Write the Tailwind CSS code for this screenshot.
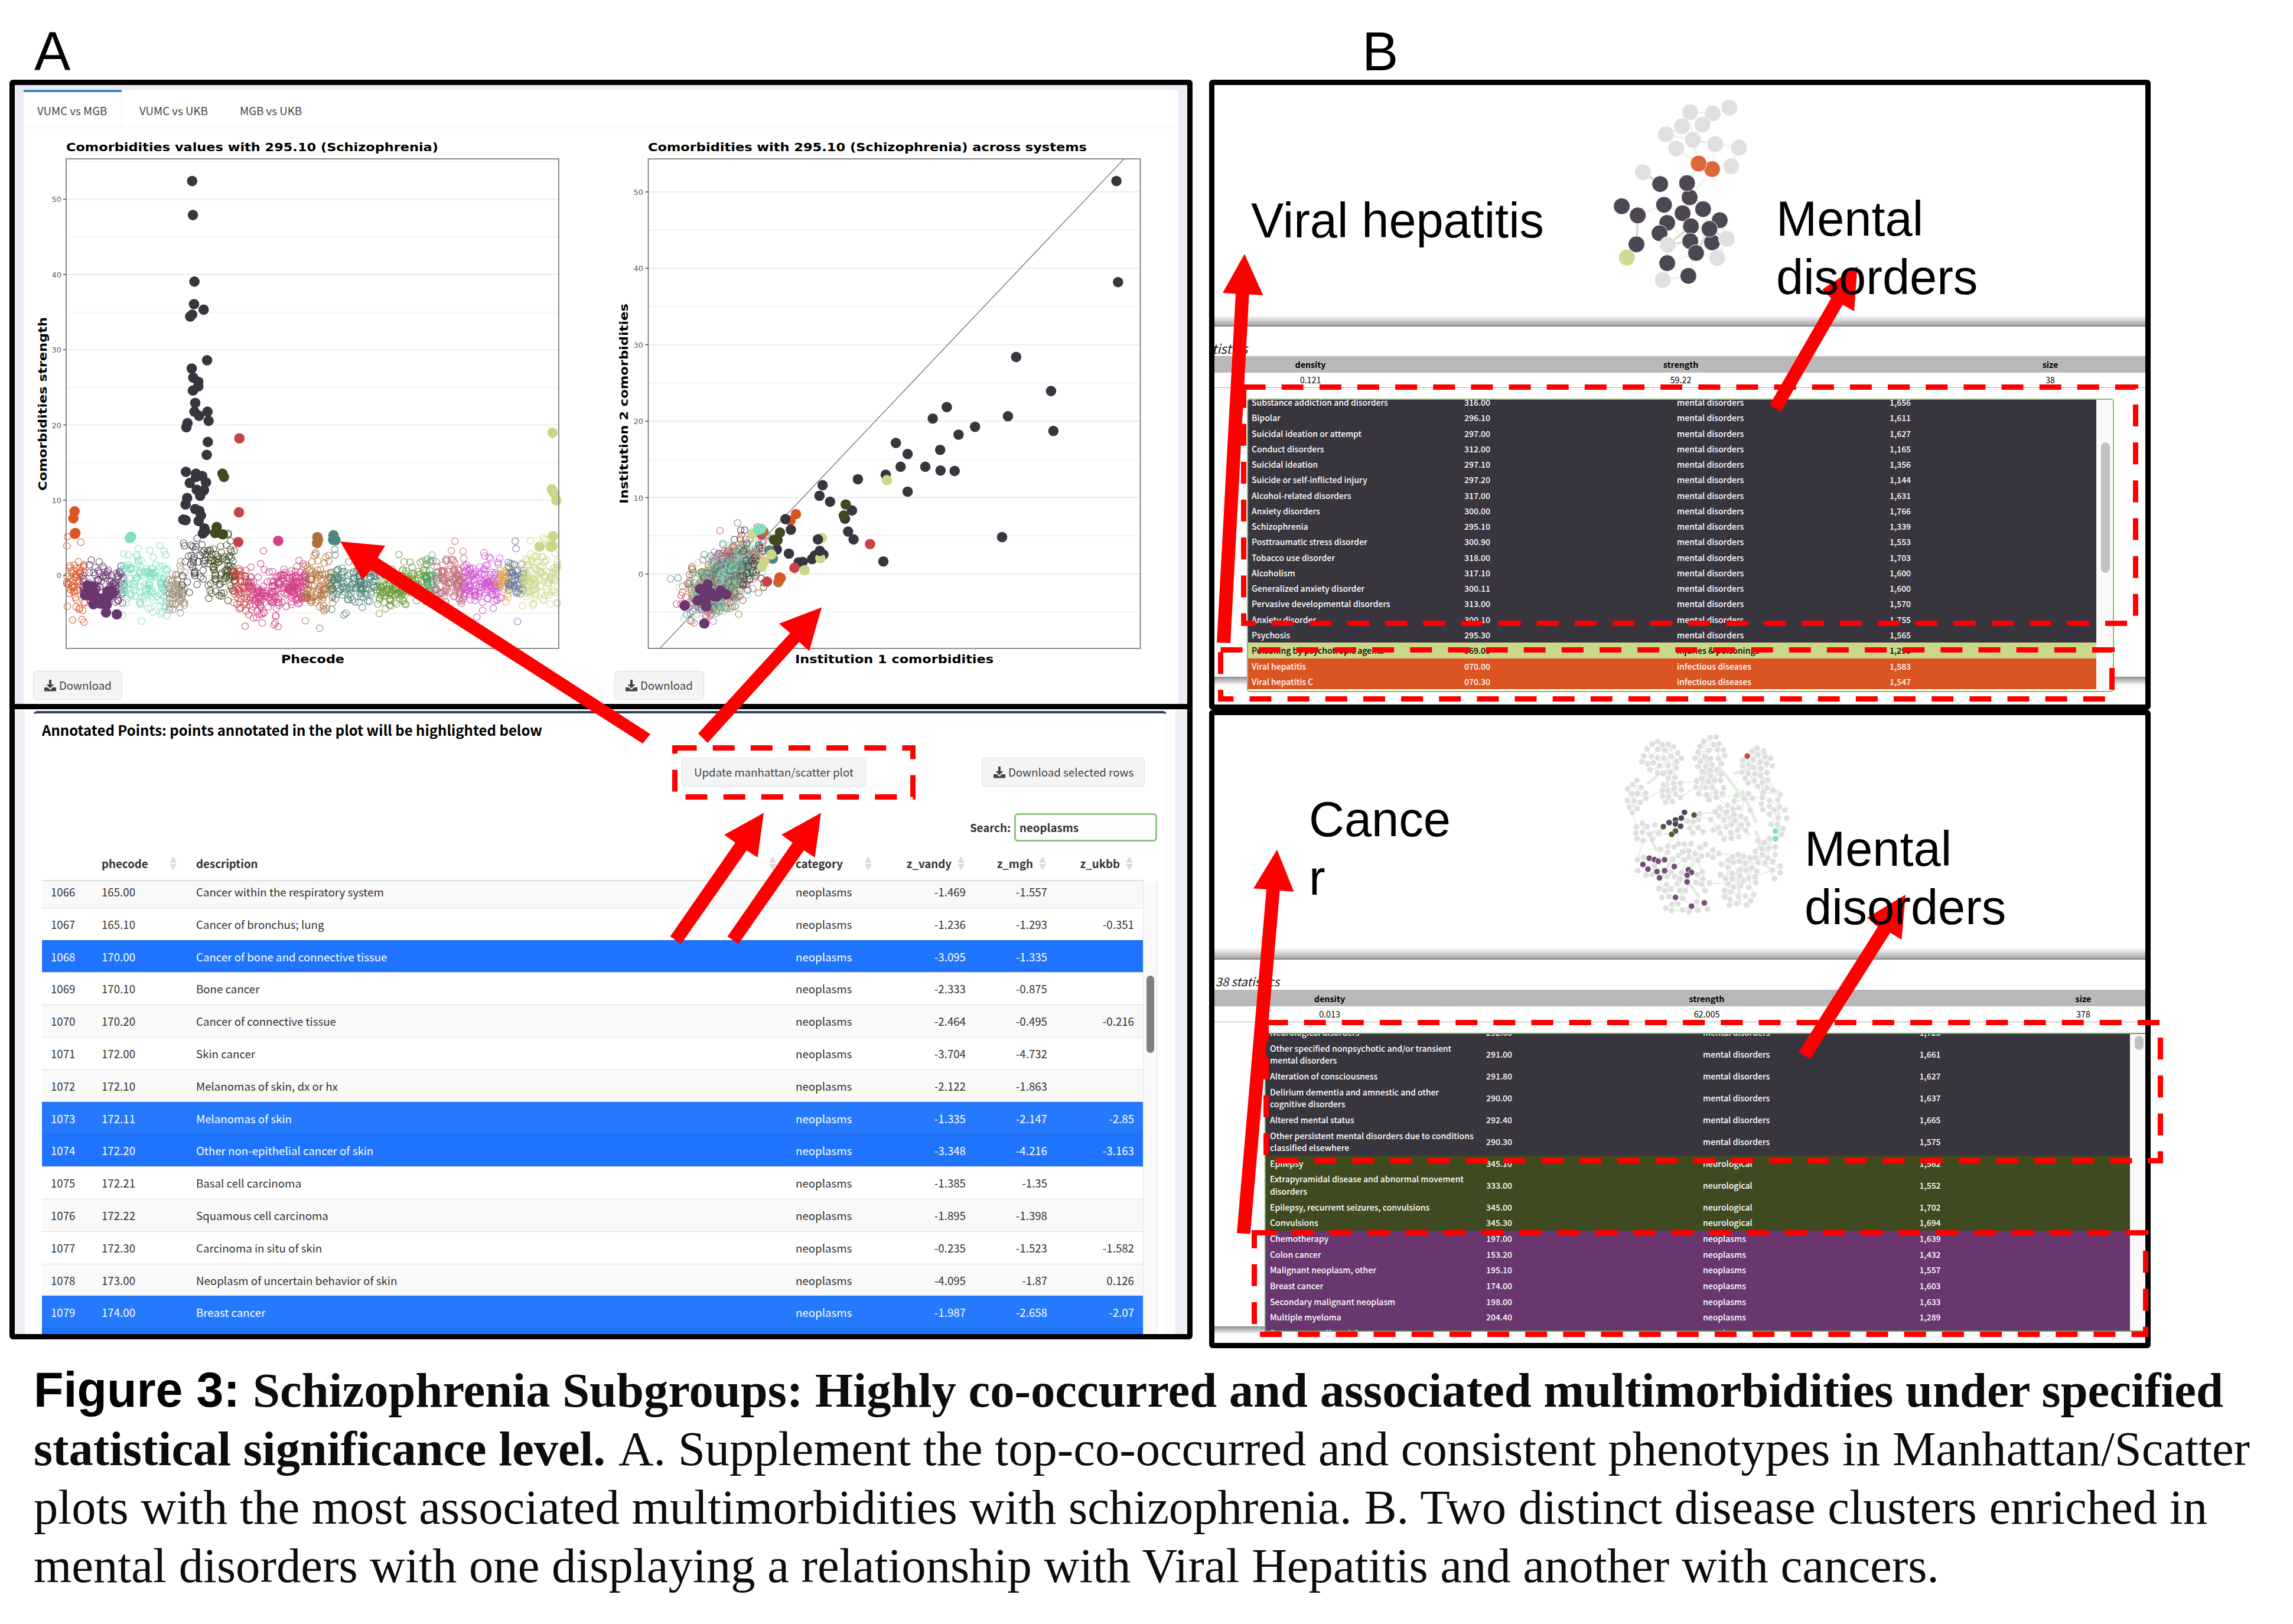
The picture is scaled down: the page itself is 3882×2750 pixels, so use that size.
<!DOCTYPE html>
<html lang="en">
<head>
<meta charset="utf-8">
<title>Schizophrenia Subgroups</title>
<script src="https://cdn.jsdelivr.net/npm/@tailwindcss/browser@4"></script>
</head>
<body class="bg-white">
<main class="relative w-[3882px] h-[2750px] overflow-hidden bg-white text-black font-['Noto_Sans_CJK_SC','Noto_Sans',sans-serif]">
  <header class="flex h-[135px] font-['Liberation_Sans',sans-serif] text-[92px] leading-none pt-[41px]">
    <div class="w-[2306px] pl-[58px]">A</div><div>B</div>
  </header>

  <div class="flex items-start gap-[28px] pl-4">
    <!-- Panel A -->
    <section class="w-[2003px] h-[2133px] border-[9px] border-black rounded-[6px] overflow-hidden text-[18.7px]">
      <div class="h-[1048px] bg-[#ecebf4] pt-2 px-[15px]">
        <div class="h-[1040px] bg-white rounded-tr-md">
          <nav class="flex h-[65px] border-b border-[#f0f0f0] leading-[62px] text-[#444] whitespace-nowrap">
            <div class="w-[166px] border-t-4 border-[#3c8dbc] pl-[23px]">VUMC vs MGB</div>
            <div class="w-[171px] border-l border-[#eee] pl-[29px] pt-1">VUMC vs UKB</div>
            <div class="pt-1 pl-[29px]">MGB vs UKB</div>
          </nav>
          <svg id="plots" class="block w-[1955px] h-[919px]" viewBox="40 217 1955 919"></svg>
          <div class="flex gap-[833px] pl-4 text-[#444] leading-none">
            <div class="flex items-center gap-1 w-[151px] h-[49px] pl-[17px] rounded-md border border-[#ddd] bg-[#f4f4f4]">
              <svg class="w-[22px] h-[22px] shrink-0" viewBox="0 0 22 22" fill="currentColor"><path d="M9 1h4v8h4.500L11 15.500 4.500 9H9zM1 14h5.500l4.500 4 4.500-4H21v6.500H1z"/></svg><span>Download</span>
            </div>
            <div class="flex items-center gap-1 w-[152px] h-[49px] pl-[17px] rounded-md border border-[#ddd] bg-[#f4f4f4]">
              <svg class="w-[22px] h-[22px] shrink-0" viewBox="0 0 22 22" fill="currentColor"><path d="M9 1h4v8h4.500L11 15.500 4.500 9H9zM1 14h5.500l4.500 4 4.500-4H21v6.500H1z"/></svg><span>Download</span>
            </div>
          </div>
        </div>
      </div>
      <div class="h-[9px] bg-black"></div>
      <div class="h-[1058px] bg-[#eeeff5] pl-[17px] pr-5">
        <div class="h-full bg-[#fdfdfe] px-[15px] pt-[3px]">
          <div class="h-[1055px] bg-white border-t-4 border-[#2c3e57] border-r border-r-[#f2f2f4] rounded-t-md pl-[14px] pr-[15px]">
            <h2 class="h-[56px] leading-[56px] text-[24px] font-bold whitespace-nowrap">Annotated Points: points annotated in the plot will be highlighted below</h2>
            <div class="flex mt-[19px] h-[49px] pl-[1083px] gap-[196px] leading-none text-[#444] whitespace-nowrap">
              <div class="flex items-center justify-center w-[312px] rounded-md border border-[#ddd] bg-[#f4f4f4]">Update manhattan/scatter plot</div>
              <div class="flex items-center w-[276px] pl-[18px] gap-1 rounded-md border border-[#ddd] bg-[#f4f4f4]">
                <svg class="w-[22px] h-[22px] shrink-0" viewBox="0 0 22 22" fill="currentColor"><path d="M9 1h4v8h4.500L11 15.500 4.500 9H9zM1 14h5.500l4.500 4 4.500-4H21v6.500H1z"/></svg><span>Download selected rows</span></div>
            </div>
            <div class="flex justify-end items-center mt-[45px] h-[48px] gap-[6px] font-bold text-[#333] leading-none">
              <span>Search:</span>
              <div class="flex items-center w-[242px] h-[48px] border-[3px] border-[#8bc67c] rounded-md pl-[6px]">neoplasms</div>
            </div>
            <div id="head" class="grid grid-cols-[86px_160px_1015px_153px_135px_138px_147px] w-[1865px] h-[67px] pl-[15px] pt-[9px] border-b-2 border-[#ddd] font-bold text-[#333] leading-none items-center"></div>
            <div class="flex h-[767px] overflow-hidden">
              <div id="rows" class="-mt-[10px] w-[1865px] text-[#333]"></div>
              <div class="w-[24px] bg-[#fafafa] border-x border-[#e4e4e4] pt-[160px] pl-[5px]"><div class="w-[13px] h-[131px] rounded-full bg-[#808080]"></div></div>
            </div>
          </div>
        </div>
      </div>
    </section>

    <!-- Panel B -->
    <div class="w-[1594px]">
      <section class="h-[1067px] border-[9px] border-black rounded-[6px] overflow-hidden">
        <svg id="net1" class="block w-[1576px] h-[390px]" viewBox="2056 145 1576 390"></svg>
        <div class="h-[19px] bg-gradient-to-b from-white to-[#a6a6a6] border-b-2 border-[#888]"></div>
        <div class="h-[50px] pt-[19px] text-[22px] italic leading-[34px] text-[#222]"><span class="-ml-1">tistics</span></div>
        <div class="grid grid-cols-[325px_929px_322px] text-center h-[28px] bg-[#b9b9b9] font-bold text-[14.2px] leading-[28px]"><span>density</span><span>strength</span><span>size</span></div>
        <div class="grid grid-cols-[325px_929px_322px] text-center h-[26px] border-b border-[#aaa] text-[14.3px] leading-[23px]"><span>0.121</span><span>59.22</span><span>38</span></div>
        <div class="flex">
          <div class="w-[55px] h-[508px] pt-[489px]"><div class="h-[17px] bg-gradient-to-b from-[#8f8f8f] to-[#fafafa] to-80%"></div></div>
          <div class="mt-[18px] flex w-[1468px] h-[497px] border-[2.500px] border-[#82bf6e] rounded-[5px] overflow-hidden">
            <div class="w-[1436px] overflow-hidden h-full"><div id="t1" class="-mt-[9px] text-[14px] font-medium text-white"></div></div>
            <div class="grow bg-[#fafafa] pt-[72px] pl-2"><div class="w-[15px] h-[221px] rounded-full bg-[#c2c2c2]"></div></div>
          </div>
          <div class="w-[53px] h-[508px] pt-[489px]"><div class="h-[17px] bg-gradient-to-b from-[#8f8f8f] to-[#fafafa] to-80%"></div></div>
        </div>
      </section>
      <section class="h-[1081px] border-[9px] border-black rounded-[6px] overflow-hidden">
        <svg id="net2" class="block w-[1576px] h-[394px]" viewBox="2056 1211 1576 394"></svg>
        <div class="h-[20px] bg-gradient-to-b from-white to-[#a6a6a6] border-b-2 border-[#888]"></div>
        <div class="h-[51px] w-[110px] flex justify-end pt-[20px] text-[20px] italic leading-[34px] text-[#222] whitespace-nowrap">38 statistics</div>
        <div class="grid grid-cols-[390px_887px_299px] text-center h-[28px] bg-[#b9b9b9] font-bold text-[14.3px] leading-[29px]"><span>density</span><span>strength</span><span class="pl-[89px]">size</span></div>
        <div class="grid grid-cols-[390px_887px_299px] text-center h-[27px] border-b border-[#aaa] text-[14.3px] leading-[25px]"><span>0.013</span><span>62.005</span><span class="pl-[89px]">378</span></div>
        <div class="flex">
          <div class="w-[85px] h-[532px] pt-[515px]"><div class="h-[16px] bg-gradient-to-b from-[#8f8f8f] to-[#fafafa] to-80%"></div></div>
          <div class="mt-[18px] flex w-[1491px] h-[506px] border-y-[2.500px] border-l-[2.500px] border-[#62a350] overflow-hidden">
            <div class="w-[1463px] overflow-hidden h-full shrink-0"><div id="t2" class="-mt-[16px] text-[14px] font-medium text-white"></div></div>
            <div class="grow bg-[#fafafa] pt-[3px] pl-2"><div class="w-[15px] h-[24px] rounded-full bg-[#c2c2c2]"></div></div>
          </div>
        </div>
      </section>
    </div>
  </div>

  <svg id="notes" class="absolute inset-0 w-[3882px] h-[2750px]" viewBox="0 0 3882 2750"></svg>
</main>

<script>
const SANS = "'Liberation Sans', sans-serif", DJV = "'DejaVu Sans', sans-serif", SERIF = "'Liberation Serif', serif";
const $ = id => document.getElementById(id);
let seed = 7;
const rnd = () => (seed = (seed * 16807) % 2147483647) / 2147483647;
const gauss = () => (rnd() + rnd() + rnd() + rnd() - 2) * 1.73;
const text = (s, x, y, size, o = {}) =>
  `<text x="${x}" y="${y}" font-family="${o.f || SANS}" font-size="${size}" fill="${o.c || '#000'}" ${o.b ? 'font-weight="700"' : ''} ${o.a ? `text-anchor="${o.a}"` : ''} ${o.w ? `textLength="${o.w}" lengthAdjust="spacingAndGlyphs"` : ''} ${o.t ? `transform="${o.t}"` : ''}>${s}</text>`;
const dot = (x, y, c, r = 8.8) => `<circle cx="${x.toFixed(1)}" cy="${y.toFixed(1)}" r="${r}" fill="${c}"/>`;
const ring = (x, y, c) => `<circle cx="${x.toFixed(1)}" cy="${y.toFixed(1)}" r="5.6" fill="none" stroke="${c}" stroke-width="1.2" stroke-opacity=".85"/>`;

/* ---------- plots ---------- */
const C = {or:'#db5522',pu:'#69366f',mi:'#80dfc3',ta:'#9c8c75',dk:'#38353f',ol:'#3f4a20',re:'#c94247',pk:'#d23f86',br:'#b1703a',te:'#50867a',gr:'#6c9a35',g2:'#4e9e69',ro:'#c4707e',ma:'#d154d1',go:'#e0a83c',sl:'#6578a0',yg:'#cbd789'};
function frame(x0, x1, y0, unit, lbl) {
  let s = '';
  for (let v = -5; v <= 55; v += 5) {
    const y = y0 - v * unit / 10;
    if (y < 269) continue;
    s += `<line x1="${x0}" x2="${x1}" y1="${y}" y2="${y}" stroke="#ebebeb" stroke-width="${v % 10 ? 1 : 2}"/>`;
    if (v % 10 === 0) s += `<line x1="${x0 - 5}" x2="${x0}" y1="${y}" y2="${y}" stroke="#444" stroke-width="1.5"/>` + text(v, lbl, y + 5, 13, {f: DJV, c: '#5a5a5a', a: 'end'});
  }
  return s;
}
const border = (x0, x1) => `<rect x="${x0}" y="269" width="${x1 - x0}" height="829" fill="none" stroke="#666" stroke-width="1.5"/>`;
const X1 = x => x * .6505, Y = y => y * .778, X2 = x => 1000 + x * .6633;
let p = frame(112, 946, 974.4, 127.4, 104);
[['or',174,222,1262,34,58],['pu',215,262,1268,18,35],['pu',262,325,1270,20,55],['mi',318,438,1268,30,140],['ta',434,482,1282,24,60],['dk',475,545,1222,32,34],['ol',540,612,1243,32,85],['re',606,655,1275,28,60],['pk',650,728,1296,26,100],['pk',725,798,1275,20,110],['br',790,866,1278,32,90],['te',860,992,1268,22,140],['gr',985,1055,1286,19,75],['gr',1045,1112,1260,20,70],['g2',1108,1140,1264,22,36],['ro',1133,1210,1266,26,110],['ma',1205,1305,1272,25,130],['go',1295,1328,1270,24,30],['sl',1322,1362,1262,24,50],['yg',1358,1452,1252,29,125]]
 .forEach(([c,a,b,m,sd,n]) => { for (let i = 0; i < n; i++) p += ring(X1(a + rnd() * (b - a)), Y(m + gauss() * sd), C[c]); });
[['or',198,1321],['mi',390,1198],['mi',416,1187],['mi',422,1332],['dk',513,1172],['dk',478,1182],['dk',502,1190],['re',638,1363],['re',640,1330],['pk',686,1199],['pk',789,1227],['pk',717,1341],['br',795,1351],['br',821,1203],['br',848,1213],['te',871,1196],['te',872,1208],['te',943,1322],['gr',1038,1207],['gr',1100,1221],['ro',1184,1178],['ro',1175,1199],['ro',1205,1200],['ma',1273,1213],['ma',1241,1343],['sl',1341,1178],['sl',1343,1194],['sl',1347,1353],['yg',1381,1177],['yg',1450,1312],['pk',660,1345],['pk',668,1344]].forEach(([c,x,y]) => p += ring(X1(x), Y(y), C[c]));
const F1 = {
 dk:[[500,394],[502,468],[506,613],[505,662],[530,674],[500,685],[495,689],[539,784],[499,802],[503,822],[516,831],[516,841],[502,850],[508,877],[506,896],[540,896],[518,905],[543,916],[488,921],[485,930],[541,962],[538,990],[484,1027],[510,1031],[526,1036],[494,1051],[536,1050],[512,1066],[531,1067],[521,1079],[487,1084],[483,1098],[508,1108],[519,1112],[523,1122],[477,1131],[483,1132],[517,1134],[532,1150],[528,1161],[534,1156],[510,1038]],
 or:[[194,1113],[191,1128],[196,1160],[195,1162]], mi:[[341,1168],[338,1171]], ol:[[579,1031],[583,1038],[564,1147],[560,1160],[580,1163]],
 re:[[623,954],[622,1115],[620,1180]], pk:[[724,1177]], br:[[826,1169],[828,1175],[825,1182]], te:[[868,1165],[871,1173],[867,1175],[873,1176]],
 yg:[[1438,942],[1436,1065],[1443,1074],[1448,1089],[1439,1167],[1404,1190],[1433,1190],[1438,1188]],
 pu:[[228,1274],[240,1276],[226,1288],[235,1285],[221,1295],[238,1298],[245,1293],[250,1305],[243,1315],[262,1314],[270,1302],[280,1287],[285,1296],[294,1291],[277,1309],[265,1305],[278,1316],[276,1333],[304,1337],[290,1285],[252,1300]]};
for (const k in F1) F1[k].forEach(([x,y]) => p += dot(X1(x), Y(y), C[k]));
p += border(112, 946);
p += text('Comorbidities values with 295.10 (Schizophrenia)', 112, 255.500, 19, {f:DJV,b:1,w:630});
p += text('Phecode', 476, 1123, 19, {f:DJV,b:1,w:107}) + text('Comorbidities strength', 0, 0, 19, {f:DJV,b:1,w:294,t:'translate(79 831) rotate(-90)'});

p += frame(1097.500, 1930.500, 972, 129.4, 1089);
p += '<line x1="1117" y1="1098" x2="1903" y2="269" stroke="#888" stroke-width="1.6"/>';
const mix = ['pk','pk','re','or','ro','ma','gr','ta','br','sl','g2','te','yg','mi','mi','te'];
for (let i = 0; i < 980; i++) { const a = gauss(), b = gauss(); p += ring(X2(342 + a * 42), Y(1258 - a * 20 + b * 30), C[i > 860 ? (rnd() < .5 ? 'mi' : 'te') : mix[Math.floor(rnd() * mix.length)]]); }
for (let i = 0; i < 30; i++) p += ring(X2(415 + gauss() * 24), Y(1230 + gauss() * 30), C[i % 2 ? 'dk' : 'ol']);
[['ta',204,1260],['br',375,1138],['pk',330,1155],['dk',383,1154],['dk',393,1154],['ma',313,1352],['gr',378,1337],['ro',264,1356],['re',219,1315],['pk',231,1296]].forEach(([c,x,y]) => p += ring(X2(x), Y(y), C[c]));
[['dk',1342,394],['dk',1346,614],['dk',1086,777],['dk',1175,851],['dk',909,886],['dk',873,911],['dk',1065,906],['dk',1181,938],['dk',981,929],['dk',939,946],['dk',779,964],['dk',892,979],['dk',809,988],['dk',791,1016],['dk',854,1016],['dk',893,1024],['dk',929,1025],['dk',753,1033],['dk',682,1043],['dk',809,1070],['dk',592,1056],['dk',584,1079],['dk',611,1092],['dk',667,1111],['dk',649,1129],['dk',657,1157],['dk',671,1174],['dk',1050,1169],['dk',747,1222],['re',713,1184],['yg',756,1045],['ol',651,1098],['ol',646,1122],['or',510,1133],['or',524,1119],['dk',497,1130],['dk',511,1153],['yg',590,1171],['dk',580,1174],['dk',477,1176],['dk',475,1196],['dk',506,1205],['te',456,1198],['te',465,1216],['ol',468,1175],['ol',474,1177],['ol',483,1159],['pk',436,1163],['br',441,1157],['yg',413,1162],['mi',428,1153],['mi',435,1151],['yg',461,1207],['yg',443,1222],['yg',437,1233],['re',450,1266],['br',479,1267],['or',482,1257],['or',485,1258],['dk',531,1224],['dk',541,1223],['re',520,1236],['yg',546,1241],['dk',565,1217],['dk',572,1209],['dk',594,1207],['yg',586,1215],['dk',585,1199],
['pu',299,1272],['pu',279,1282],['pu',296,1284],['pu',305,1290],['pu',290,1297],['pu',315,1297],['pu',332,1285],['pu',346,1294],['pu',322,1298],['pu',273,1307],['pu',293,1308],['pu',295,1320],['pu',240,1318],['pu',290,1357]].forEach(([c,x,y]) => p += dot(X2(x), Y(y), C[c]));
p += border(1097.500, 1930.500);
p += text('Comorbidities with 295.10 (Schizophrenia) across systems', 1097, 255.500, 19, {f:DJV,b:1,w:743});
p += text('Institution 1 comorbidities', 1346, 1123, 19, {f:DJV,b:1,w:336}) + text('Institution 2 comorbidities', 0, 0, 19, {f:DJV,b:1,w:339,t:'translate(1063 853) rotate(-90)'});
$('plots').innerHTML = p;

/* ---------- annotated points table ---------- */
const sort = '<svg class="w-3 h-6 shrink-0" viewBox="0 0 12 24" fill="#dcdcdc"><path d="M6 0l6 11H0zM6 24l6-11H0z"/></svg>';
$('head').innerHTML = '<span></span>' +
  ['phecode','description'].map(t => `<span class="flex items-center justify-between pr-[33px]">${t}${sort}</span>`).join('') +
  `<span class="flex items-center justify-between pr-6">category${sort}</span>` +
  ['z_vandy','z_mgh','z_ukbb'].map(t => `<span class="flex items-center justify-end gap-2.5 pr-0.5">${t}${sort}</span>`).join('');
$('rows').innerHTML = `1066|165.00|Cancer within the respiratory system|-1.469|-1.557|
1067|165.10|Cancer of bronchus; lung|-1.236|-1.293|-0.351
1068|170.00|Cancer of bone and connective tissue|-3.095|-1.335||b
1069|170.10|Bone cancer|-2.333|-0.875|
1070|170.20|Cancer of connective tissue|-2.464|-0.495|-0.216
1071|172.00|Skin cancer|-3.704|-4.732|
1072|172.10|Melanomas of skin, dx or hx|-2.122|-1.863|
1073|172.11|Melanomas of skin|-1.335|-2.147|-2.85|c
1074|172.20|Other non-epithelial cancer of skin|-3.348|-4.216|-3.163|b
1075|172.21|Basal cell carcinoma|-1.385|-1.35|
1076|172.22|Squamous cell carcinoma|-1.895|-1.398|
1077|172.30|Carcinoma in situ of skin|-0.235|-1.523|-1.582
1078|173.00|Neoplasm of uncertain behavior of skin|-4.095|-1.87|0.126
1079|174.00|Breast cancer|-1.987|-2.658|-2.07|c
||||||b`.split('\n').map((l, i) => {
  const [n, code, d, a, b, c, k] = l.split('|');
  const tone = k === 'b' ? 'bg-[#1f74ff] text-white border-[#1766e0]' : k === 'c' ? 'bg-[#2579fc] text-white border-[#1766e0]' : i % 2 ? 'bg-white border-[#ddd]' : 'bg-[#f9f9f9] border-[#ddd]';
  return `<div class="grid grid-cols-[86px_160px_1015px_153px_135px_138px_147px] h-[54.8px] pl-[15px] border-t leading-[53px] whitespace-nowrap ${tone}"><span>${n}</span><span>${code}</span><span>${d}</span><span>${n ? 'neoplasms' : ''}</span><span class="text-right">${a}</span><span class="text-right">${b}</span><span class="text-right">${c}</span></div>`;
}).join('');

/* ---------- cluster member tables ---------- */
$('t1').innerHTML = `Substance addiction and disorders|316.00|1,656
Bipolar|296.10|1,611
Suicidal ideation or attempt|297.00|1,627
Conduct disorders|312.00|1,165
Suicidal ideation|297.10|1,356
Suicide or self-inflicted injury|297.20|1,144
Alcohol-related disorders|317.00|1,631
Anxiety disorders|300.00|1,766
Schizophrenia|295.10|1,339
Posttraumatic stress disorder|300.90|1,553
Tobacco use disorder|318.00|1,703
Alcoholism|317.10|1,600
Generalized anxiety disorder|300.11|1,600
Pervasive developmental disorders|313.00|1,570
Anxiety disorder|300.10|1,755
Psychosis|295.30|1,565
Poisoning by psychotropic agents|969.00|1,293
Viral hepatitis|070.00|1,583
Viral hepatitis C|070.30|1,547`.split('\n').map((l, i) => {
  const [d, code, n] = l.split('|');
  const tone = i < 16 ? 'bg-[#38353f]' : i === 16 ? 'bg-[#cbd789] text-black' : 'bg-[#db5522]';
  const cat = i < 16 ? 'mental disorders' : i === 16 ? 'injuries &amp; poisonings' : 'infectious diseases';
  return `<div class="grid grid-cols-[360px_360px_360px_1fr] h-[26.27px] pl-[6px] leading-[27px] whitespace-nowrap ${tone}"><span>${d}</span><span>${code}</span><span>${cat}</span><span>${n}</span></div>`;
}).join('');
$('t2').innerHTML = `Neurological disorders|292.60|1,723|m
Other specified nonpsychotic and/or transient<br>mental disorders|291.00|1,661|m
Alteration of consciousness|291.80|1,627|m
Delirium dementia and amnestic and other<br>cognitive disorders|290.00|1,637|m
Altered mental status|292.40|1,665|m
Other persistent mental disorders due to conditions<br>classified elsewhere|290.30|1,575|m
Epilepsy|345.10|1,562|n
Extrapyramidal disease and abnormal movement<br>disorders|333.00|1,552|n
Epilepsy, recurrent seizures, convulsions|345.00|1,702|n
Convulsions|345.30|1,694|n
Chemotherapy|197.00|1,639|p
Colon cancer|153.20|1,432|p
Malignant neoplasm, other|195.10|1,557|p
Breast cancer|174.00|1,603|p
Secondary malignant neoplasm|198.00|1,633|p
Multiple myeloma|204.40|1,289|p
Breast cancer [female]|174.10|1,588|p`.split('\n').map(l => {
  const [d, code, n, k] = l.split('|');
  const tone = {m: 'bg-[#38353f]', n: 'bg-[#3f4a20]', p: 'bg-[#69366f]'}[k];
  const cat = {m: 'mental disorders', n: 'neurological', p: 'neoplasms'}[k];
  const h = d.includes('<br>') ? 'h-[47.2px]' : 'h-[26.7px]';
  return `<div class="grid grid-cols-[366px_367px_366.500px_1fr] items-center pl-[7px] leading-[20.500px] whitespace-nowrap ${h} ${tone}"><span>${d}</span><span>${code}</span><span>${cat}</span><span>${n}</span></div>`;
}).join('');

/* ---------- networks ---------- */
const N1 = [['g',828,449],['g',767,468],['g',802,473],['g',786,519],['g',754,527],['g',729,560],['g',771,583],['g',806,600],['g',843,615],['g',745,619],['g',831,692],['g',693,717],['o',801,704],['o',780,681],['d',720,766],['d',766,821],['d',762,762],['d',660,858],['d',726,852],['d',685,896],['d',787,870],['d',755,887],['d',813,916],['d',731,927],['d',719,970],['d',768,941],['d',801,1008],['d',767,1003],['d',797,952],['g',824,993],['d',683,1016],['g',732,1018],['d',776,1052],['y',668,1071],['g',809,1072],['d',731,1094],['g',724,1164],['d',764,1147]];
const P5 = ([, x, y]) => [2030 + x * 1.0842, y * .4082];
let n1 = '';
for (let i = 0; i < N1.length; i++) for (let j = i + 1; j < N1.length; j++) {
  const [a, b] = P5(N1[i]), [c, d] = P5(N1[j]), r = Math.hypot(a - c, b - d);
  if (r < 52 && rnd() < .6) n1 += `<line x1="${a}" y1="${b}" x2="${c}" y2="${d}" stroke="${rnd() < .25 ? '#cfe0cb' : '#edf5eb'}" stroke-width="${2 + rnd() * 2}"/>`;
}
n1 += '<line x1="2876" y1="278" x2="2858" y2="320" stroke="#eef5ec" stroke-width="3"/><line x1="2898" y1="287" x2="2862" y2="335" stroke="#eef5ec" stroke-width="3"/>';
const NC = {g:'#e0e0e0',o:'#df6638',d:'#4c4752',y:'#cfd991'};
N1.forEach(n => { const [x, y] = P5(n); n1 += `<circle cx="${x}" cy="${y}" r="14" fill="${NC[n[0]]}" stroke="#fff" stroke-width="1"/>`; });
$('net1').innerHTML = n1;

const P8 = (x, y) => [2030 + x * 1.0842, 1200 + y * .3444];
const special = [['#c94a4c',856,233],['#80dfc3',900,602],['#80dfc3',900,640],['#4c4752',758,510],['#525a36',773,523],['#4c4752',753,538],['#4c4752',744,547],['#4c4752',734,560],['#4c4752',744,567],['#4c4752',752,578],['#525a36',725,580],['#525a36',744,602],['#525a36',738,618],
...[[703,735],[711,742],[717,750],[727,743],[693,766],[701,789],[715,801],[727,797],[742,776],[719,832],[764,792],[769,805],[762,819],[762,852],[744,928],[789,955],[769,971]].map(q => ['#744e79', ...q])];
const pts = special.map(([c, x, y]) => [...P8(x, y), c]);
[[722,240,32,85,30],[797,225,24,95,32],[798,365,24,90,21],[870,290,26,95,34],[682,430,16,88,21],[738,405,17,70,20],[893,450,16,75,15],[850,460,28,45,8],[828,560,30,85,24],[904,550,14,85,11],[700,610,20,55,12],[765,705,48,45,22],[700,765,20,55,9],[845,800,34,88,30],[884,700,18,70,14],[740,875,23,95,20],[786,850,12,50,7],[843,915,24,68,15],[778,570,18,55,8],[765,975,38,30,7],[900,800,10,40,5]].forEach(([cx,cy,rx,ry,n]) => {
  for (let k = 0, t = 0; k < n && t < n * 30; t++) {
    const an = rnd() * 6.283, q = Math.sqrt(rnd()), [x, y] = P8(cx + Math.cos(an) * q * rx, cy + Math.sin(an) * q * ry);
    if (pts.every(o => Math.hypot(o[0] - x, o[1] - y) > 9.500)) { pts.push([x, y, '#dfdfdf']); k++; }
  }
});
let n2 = '';
[[716,330,700,370],[735,300,729,400],[790,240,802,400],[810,280,850,440],[848,400,870,560],[868,600,885,700],[905,400,905,640],[740,730,722,830],[765,860,782,930],[880,650,860,760],[815,500,860,620],[727,590,700,620],[840,780,845,960],[800,230,780,420],[705,640,715,700],[835,320,868,290]].forEach(([a,b,c,d]) => { const [x,y] = P8(a,b), [u,v] = P8(c,d); n2 += `<line x1="${x}" y1="${y}" x2="${u}" y2="${v}" stroke="#d5e7d1" stroke-width="5" stroke-opacity=".75"/>`; });
for (let i = 0; i < pts.length; i++) for (let j = i + 1; j < pts.length; j++) {
  const r = Math.hypot(pts[i][0] - pts[j][0], pts[i][1] - pts[j][1]);
  if (r < 34 && rnd() < .1) n2 += `<line x1="${pts[i][0]}" y1="${pts[i][1]}" x2="${pts[j][0]}" y2="${pts[j][1]}" stroke="#e0edde" stroke-width="1.8"/>`;
}
[...pts.slice(special.length), ...pts.slice(0, special.length)].forEach(([x, y, c]) => n2 += `<circle cx="${x.toFixed(1)}" cy="${y.toFixed(1)}" r="5.2" fill="${c}" stroke="#fff" stroke-width=".8"/>`);
$('net2').innerHTML = n2;

/* ---------- arrows, dashed boxes, labels, caption ---------- */
const arrow = pts => `<polygon points="${pts}" fill="#f00"/>`;
const box = (l, t, r, b) => `<rect x="${l}" y="${t}" width="${r - l}" height="${b - t}" fill="none" stroke="#f00" stroke-width="9" stroke-dasharray="37 27.15"/>`;
$('notes').innerHTML =
  box(1142.500,1266.500,1545.500,1349.500) + box(2105.500,655.500,3615.500,1055.500) + box(2066.500,1100.500,3575.500,1183.500) + box(2143.500,1731.500,3657.500,1965.500) + box(2123.500,2087.500,3632.500,2259.500) +
  arrow('576,917 652,924 639.5,944.5 1101,1243 1088,1259 628,965 614,982') +
  arrow('1391,1028.6 1370,1102.5 1353,1087 1198,1258 1182,1242 1337.6,1072 1319,1056') +
  arrow('1293,1376.5 1282.6,1452 1264,1440 1153,1598.6 1134.6,1585.7 1244.8,1427 1226,1413.6') +
  arrow('1390,1376.5 1379.6,1452 1361,1440 1250,1598.6 1231.6,1585.7 1341.8,1427 1323,1413.6') +
  arrow('2107,430 2138.4,500 2114.6,498.4 2083,1089 2060,1088 2092,497.6 2070,496') +
  arrow('3144.6,451 3139,527 3119.6,516 3015,697 2996,685.5 3100,505 3085,490') +
  arrow('2162,1438.7 2190.5,1510 2166.6,1508 2116.7,2089.6 2094,2088 2144,1506 2122,1504.5') +
  arrow('3226,1515 3219.4,1591 3200,1579.5 3065,1793 3045,1781.6 3179,1569.5 3161,1554') +
  text('Viral hepatitis', 2118, 402, 83, {w: 496}) + text('Mental', 3007, 399, 83) + text('disorders', 3007, 498, 83) +
  text('Cance', 2216, 1416, 83) + text('r', 2216, 1515, 83) + text('Mental', 3055, 1466, 83) + text('disorders', 3055, 1565, 83) +
  text('Figure 3:', 57, 2382, 83, {b: 1, w: 349}) +
  text('Schizophrenia Subgroups: Highly co-occurred and associated multimorbidities under specified', 428, 2382, 83, {f: SERIF, b: 1, c: '#0c0c0c', w: 3336}) +
  text('statistical significance level.', 57, 2481, 83, {f: SERIF, b: 1, c: '#0c0c0c', w: 968}) +
  text('A. Supplement the top-co-occurred and consistent phenotypes in Manhattan/Scatter', 1047, 2481, 83, {f: SERIF, c: '#0c0c0c', w: 2762}) +
  text('plots with the most associated multimorbidities with schizophrenia. B. Two distinct disease clusters enriched in', 57, 2580, 83, {f: SERIF, c: '#0c0c0c', w: 3680}) +
  text('mental disorders with one displaying a relationship with Viral Hepatitis and another with cancers.', 57, 2679, 83, {f: SERIF, c: '#0c0c0c', w: 3226});
</script>
</body>
</html>
